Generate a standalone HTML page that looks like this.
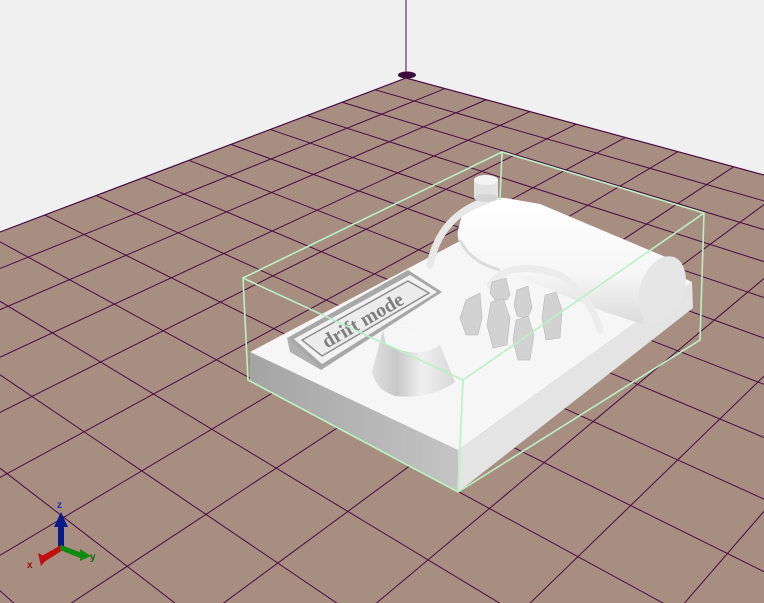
<!DOCTYPE html>
<html><head><meta charset="utf-8"><style>
html,body{margin:0;padding:0;background:#f0f0f0;width:764px;height:603px;overflow:hidden}
svg{display:block;overflow:hidden}
</style></head><body>
<svg id="s" width="764" height="603" viewBox="0 0 764 603" xmlns="http://www.w3.org/2000/svg">
<defs>
<linearGradient id="lf" x1="0" x2="1" y1="0" y2="0"><stop offset="0" stop-color="#a4a4a4"/><stop offset="1" stop-color="#c4c4c4"/></linearGradient>
<linearGradient id="cyl" x1="0" x2="0" y1="0" y2="1"><stop offset="0" stop-color="#ffffff"/><stop offset="0.6" stop-color="#f6f6f6"/><stop offset="1" stop-color="#dcdcdc"/></linearGradient>
<linearGradient id="cone" x1="0" x2="1"><stop offset="0" stop-color="#e0e0e0"/><stop offset="0.3" stop-color="#c8c8c8"/><stop offset="0.6" stop-color="#efefef"/><stop offset="1" stop-color="#d8d8d8"/></linearGradient>
<clipPath id="pc"><polygon points="0,232 406,78 764,175 764,603 0,603"/></clipPath>
</defs>
<polygon points="0,232 406,78 764,175 764,603 0,603" fill="#a88e81"/>
<g id="grid" clip-path="url(#pc)" stroke="#4a0b45" stroke-width="1" fill="none"></g>
<polyline points="0,232 406,78 764,175" fill="none" stroke="#4a0b45" stroke-width="1.2"/>
<line x1="406" y1="0" x2="406" y2="75" stroke="#4a0b45" stroke-width="1"/>
<ellipse cx="407" cy="75" rx="9" ry="3.5" fill="#3c0a3c"/>

<!-- base -->
<polygon points="250,352 458,450 458,492 250,382" fill="url(#lf)"/>
<polygon points="458,450 692,282 693,308 458,492" fill="#e4e4e4"/>
<polygon points="250,352 528,205 692,282 458,450" fill="#f6f6f6"/>

<!-- label wedge -->
<polygon points="287,338 408,270 442,292 321,370" fill="#a8a8a8"/>
<polygon points="294,339 410,275 437,292 322,364" fill="#f2f2f2"/>
<polygon points="302,340 408,281 429,293 322,356" fill="#ececec" stroke="#8e8e8e" stroke-width="1.5"/>
<polygon points="287,338 321,370 290,352" fill="#b0b0b0"/>
<text x="0" y="0" transform="translate(366,326) rotate(-30)" text-anchor="middle" font-family="Liberation Serif, serif" font-weight="bold" font-size="20" fill="#7e7e7e">drift mode</text>

<!-- cone -->
<path d="M383,330 Q410,320 440,345 L455,382 Q430,400 395,396 Q376,390 372,372 Z" fill="url(#cone)"/>
<path d="M383,330 Q410,320 440,345 Q420,360 386,345 Z" fill="#f6f6f6"/>

<!-- cylinder -->
<path d="M462,215 Q478,196 505,198 L540,204 L668,258 L642,324 L605,312 L482,262 Q455,250 458,230 Z" fill="url(#cyl)"/>
<ellipse cx="662" cy="290" rx="22" ry="35" transform="rotate(20 662 290)" fill="#e6e6e6"/>
<path d="M460,240 Q470,262 500,270" fill="none" stroke="#dcdcdc" stroke-width="3"/>

<!-- knob + tube -->
<path d="M430,265 Q440,215 488,200" fill="none" stroke="#e8e8e8" stroke-width="7" stroke-linecap="round"/>
<rect x="474" y="180" width="24" height="18" fill="#e2e2e2"/>
<ellipse cx="486" cy="180" rx="12" ry="5" fill="#f4f4f4"/>
<ellipse cx="486" cy="198" rx="12" ry="4" fill="#d4d4d4"/>
<path d="M490,285 Q510,258 560,275 Q590,295 600,330" fill="none" stroke="#ececec" stroke-width="7" stroke-linecap="round"/>

<!-- pegs -->
<g fill="#d2d2d2" stroke="#b8b8b8" stroke-width="0.6">
<polygon points="466,300 480,293 482,318 478,335 466,335 460,318"/>
<polygon points="492,282 506,278 510,295 507,300 495,300 490,293"/>
<polygon points="491,302 503,298 510,318 507,345 493,348 487,325"/>
<polygon points="517,290 528,286 532,308 527,318 517,316 514,305"/>
<polygon points="516,320 528,316 534,335 530,360 518,360 513,340"/>
<polygon points="545,295 556,292 562,310 560,338 546,340 542,318"/>
</g>

<!-- bounding box -->
<g fill="none" stroke="#b8f2c2" stroke-width="1.6">
<polyline points="243,278 502,152 704,213 463,380 243,278 248,380 458,492 700,340 704,213"/>
<line x1="463" y1="380" x2="458" y2="492"/>
<line x1="502" y1="152" x2="500" y2="200"/>
</g>

<!-- axis gizmo -->
<g>
<rect x="58" y="525" width="6" height="22" fill="#0a1a8a"/>
<polygon points="54,527 61,512 68,527" fill="#0a1a8a"/>
<text x="57" y="508" font-family="Liberation Sans, sans-serif" font-size="10" font-weight="bold" fill="#1030d0">z</text>
<polygon points="61,545 40,557 44,562 63,550" fill="#c01010"/>
<polygon points="38,553 41,566 48,558" fill="#c01010"/>
<polygon points="61,545 82,553 80,558 60,550" fill="#118a11"/>
<polygon points="80,549 91,556 80,561" fill="#118a11"/>
<text x="27" y="568" font-family="Liberation Sans, sans-serif" font-size="10" font-weight="bold" fill="#a01010">x</text>
<text x="90" y="560" font-family="Liberation Sans, sans-serif" font-size="10" font-weight="bold" fill="#106010">y</text>
</g>
</svg>
<script>
(function(){
var p=-0.027,q=-0.02756,VB=[-1000,-303],VA=[1500,-338];
function P(u,v){var d=1+p*u+q*v;return[(406+p*VB[0]*u+q*VA[0]*v)/d,(78+p*VB[1]*u+q*VA[1]*v)/d];}
var g=document.getElementById('grid'),h='';
for(var u=1;u<34;u++){var vm=(1+p*u-0.04)/(-q);if(vm<=0)break;var a=P(u,0),b=P(u,vm);
h+='<line x1="'+a[0]+'" y1="'+a[1]+'" x2="'+b[0]+'" y2="'+b[1]+'"/>';}
for(var v=1;v<34;v++){var um=(1+q*v-0.04)/(-p);if(um<=0)break;var a=P(0,v),b=P(um,v);
h+='<line x1="'+a[0]+'" y1="'+a[1]+'" x2="'+b[0]+'" y2="'+b[1]+'"/>';}
g.innerHTML=h;
})();
</script>
</body></html>
